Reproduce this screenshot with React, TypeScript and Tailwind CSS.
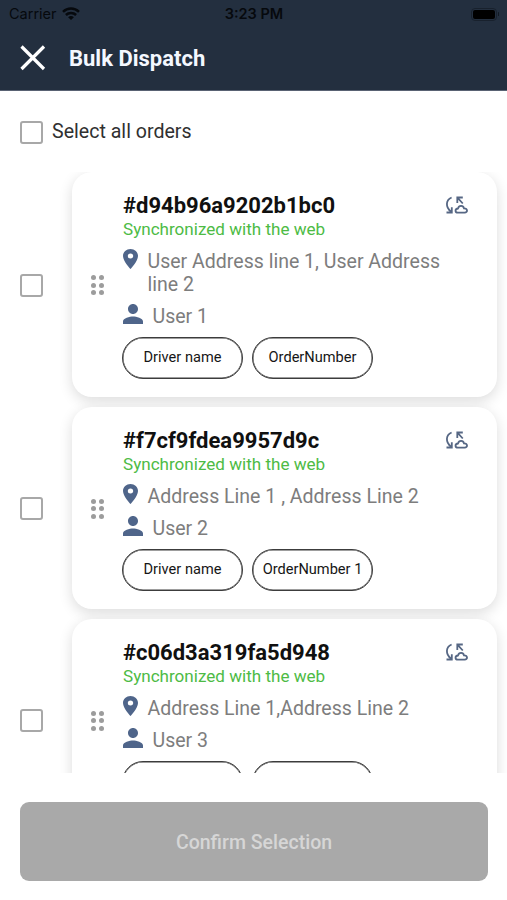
type Order = {
  id: string;
  address: string;
  user: string;
  orderNumber: string;
};

const orders: Order[] = [
  { id: "#d94b96a9202b1bc0", address: "User Address line 1, User Address line 2", user: "User 1", orderNumber: "OrderNumber" },
  { id: "#f7cf9fdea9957d9c", address: "Address Line 1 , Address Line 2", user: "User 2", orderNumber: "OrderNumber 1" },
  { id: "#c06d3a319fa5d948", address: "Address Line 1,Address Line 2", user: "User 3", orderNumber: "" },
];

function Checkbox() {
  return <span className="mt-px block size-[23px] shrink-0 rounded-[3px] border-2 border-[#a8a8a8] bg-white" />;
}

function WifiIcon() {
  return (
    <svg width="18" height="14" viewBox="0 0 18 14" fill="none" stroke="#06090d" strokeWidth="2.500">
      <path d="M1 4.900C5.500.500 12.500.500 17 4.900" />
      <path d="M3.900 8C6.700 5.200 11.300 5.200 14.100 8" />
      <path d="M6.100 10.200C7.800 8.700 10.200 8.700 11.900 10.200L9 13.100Z" fill="#06090d" stroke="none" />
    </svg>
  );
}

function PinIcon() {
  return (
    <svg className="block shrink-0" width="15" height="20" viewBox="0 0 14 20" preserveAspectRatio="none">
      <path fill="#4f658a" fillRule="evenodd" d="M7 0C3.130 0 0 3.130 0 7c0 5.250 7 13 7 13s7-7.750 7-13c0-3.870-3.130-7-7-7Zm0 9.500a2.500 2.500 0 1 1 0-5 2.500 2.500 0 0 1 0 5Z" />
    </svg>
  );
}

function PersonIcon() {
  return (
    <svg className="block shrink-0" width="20" height="20" viewBox="0 0 16 16">
      <path fill="#4f658a" d="M8 8c2.210 0 4-1.790 4-4S10.210 0 8 0 4 1.790 4 4s1.790 4 4 4Zm0 2c-2.670 0-8 1.340-8 4v2h16v-2c0-2.660-5.330-4-8-4Z" />
    </svg>
  );
}

function SyncIcon() {
  return (
    <svg className="block shrink-0" width="23" height="18" viewBox="0 0 23 18" fill="none" stroke="#566784" strokeWidth="1.800">
      <path d="M6.600 1.500C.700 3.900.200 11.200 6.100 15.800" />
      <path d="M1.500 16.500H6.800V11.200" />
      <path d="M17.800 1.500H12.300V6.900M12.600 1.800L17.800 7.500" />
      <path d="M13 16.600C9.700 16.600 9.700 12.800 13 12.500C14 8.900 18.300 9.200 19 12.400C22.900 12.500 22.900 16.500 19.700 16.600Z" />
    </svg>
  );
}

function DragHandle() {
  return (
    <div className="mt-px grid w-[13px] shrink-0 grid-cols-2 gap-x-[3px] gap-y-[2.500px]">
      {[0, 1, 2, 3, 4, 5].map((dot) => (
        <span key={dot} className="size-[5px] rounded-full bg-[#9c9c9c]" />
      ))}
    </div>
  );
}

function Chip({ label }: { label: string }) {
  return (
    <span className="flex h-[42px] w-[121px] items-center justify-center whitespace-nowrap rounded-full border border-[#3c3c3c] text-[14.600px] text-[#161616] shadow-[inset_0_0_0_0.500px_#3c3c3c]">
      {label}
    </span>
  );
}

function OrderRow({ order }: { order: Order }) {
  return (
    <li className="flex items-center pl-5 pr-2.5">
      <Checkbox />
      <article className="ml-[29px] flex flex-1 items-center rounded-[20px] bg-white pl-[19px] pr-[29px] shadow-[0_4px_14px_rgba(0,0,0,0.14)]">
        <DragHandle />
        <div className="ml-[19px] flex-1 pb-[18px] pt-[22px]">
          <div className="flex justify-between">
            <h2 className="text-[22px] font-bold leading-6 text-[#101010]">{order.id}</h2>
            <div className="pt-[2px]"><SyncIcon /></div>
          </div>
          <p className="text-[17.080px] leading-[23px] text-[#4dbb45]">Synchronized with the web</p>
          <div className="mt-2 flex">
            <PinIcon />
            <p className="ml-[9.500px] w-[310px] pt-px text-[19.550px] leading-[23px] text-[#7d7d7d]">{order.address}</p>
          </div>
          <div className="mt-2 flex items-start">
            <PersonIcon />
            <p className="ml-[9.500px] pt-px text-[19.550px] leading-[24px] text-[#7d7d7d]">{order.user}</p>
          </div>
          <div className="-ml-px mt-2 flex gap-[9px]">
            <Chip label="Driver name" />
            <Chip label={order.orderNumber} />
          </div>
        </div>
      </article>
    </li>
  );
}

export default function App() {
  return (
    <div className="flex h-[900px] w-[507px] flex-col overflow-hidden bg-white font-['Roboto',sans-serif]">
      <header className="h-[91px] shrink-0 border-b border-[#596273] bg-[#232f3f]">
        <div className="grid h-7 grid-cols-3 items-center pl-[9px] pr-2 font-['Inter',sans-serif] text-[14.500px] text-[#06090d]">
          <div className="flex items-center gap-[5px]">Carrier <WifiIcon /></div>
          <div className="text-center font-semibold">3:23 PM</div>
          <div className="flex items-center justify-end gap-px">
            <span className="flex h-[13px] w-[26px] rounded-[4px] border border-[#18212d] p-px"><span className="flex-1 rounded-[2px] bg-black" /></span>
            <span className="h-1 w-px rounded-full bg-[#111923]" />
          </div>
        </div>
        <div className="flex h-[60px] items-center pl-[20px]">
          <svg width="26" height="26" viewBox="0 0 26 26" stroke="#fff" strokeWidth="3.200"><path d="M1.500 1.500L24 24M24 1.500L1.500 24" /></svg>
          <h1 className="ml-[23px] text-[22px] font-bold text-[#f4f8ff]">Bulk Dispatch</h1>
        </div>
      </header>
      <div className="flex h-[81px] shrink-0 items-center pl-5">
        <Checkbox />
        <span className="ml-[9px] pt-px text-[19.600px] text-[#303030]">Select all orders</span>
      </div>
      <ul className="flex h-[601px] shrink-0 flex-col gap-[10px] overflow-hidden">
        {orders.map((order) => <OrderRow key={order.id} order={order} />)}
      </ul>
      <footer className="px-5 pt-[29px]">
        <button className="h-[79px] w-[468px] rounded-[9px] bg-[#a9a9a9] pt-[2px] text-[19.550px] font-medium text-[#d6d6d6]">Confirm Selection</button>
      </footer>
    </div>
  );
}
